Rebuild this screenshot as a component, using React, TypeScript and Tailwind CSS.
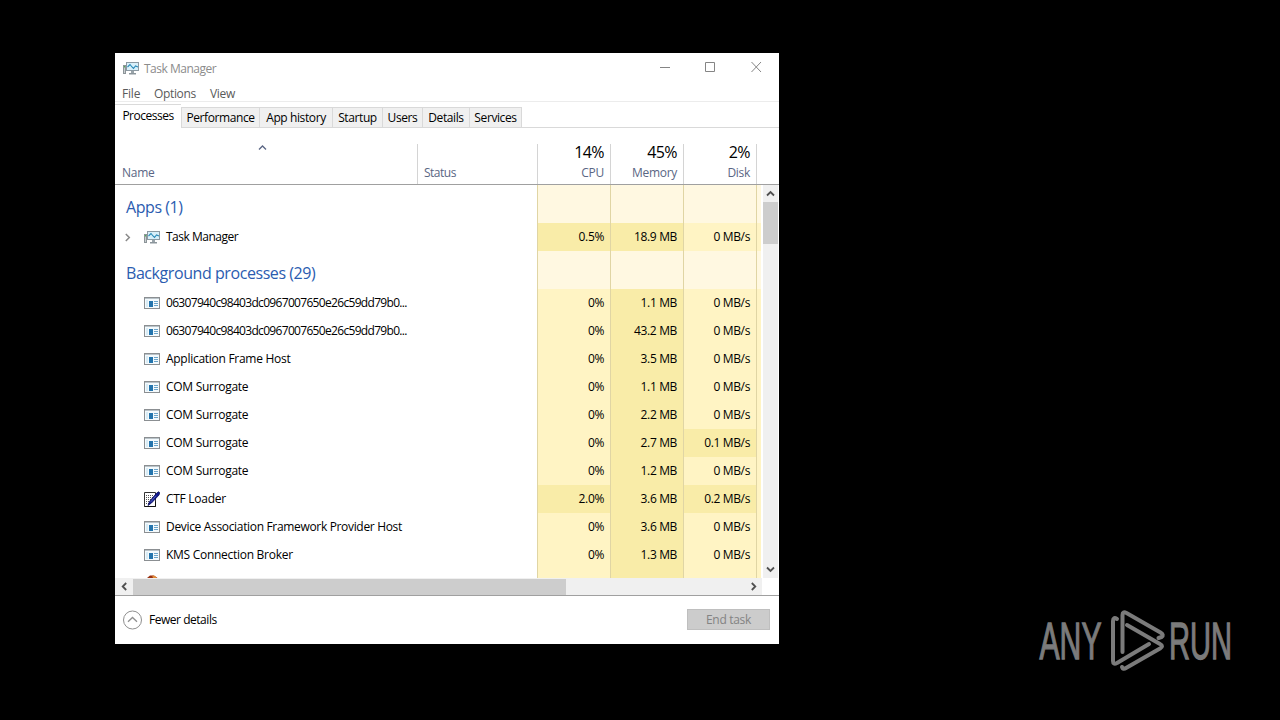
import React from 'react';

type Row = { name: string; cpu: string; mem: string; disk: string; icon?: 'tm' | 'ctf'; track?: string };

const rows: Row[] = [
  { name: '06307940c98403dc0967007650e26c59dd79b0...', cpu: '0%', mem: '1.1 MB', disk: '0 MB/s', track: 'tracking-[-0.68px]' },
  { name: '06307940c98403dc0967007650e26c59dd79b0...', cpu: '0%', mem: '43.2 MB', disk: '0 MB/s', track: 'tracking-[-0.68px]' },
  { name: 'Application Frame Host', cpu: '0%', mem: '3.5 MB', disk: '0 MB/s' },
  { name: 'COM Surrogate', cpu: '0%', mem: '1.1 MB', disk: '0 MB/s' },
  { name: 'COM Surrogate', cpu: '0%', mem: '2.2 MB', disk: '0 MB/s' },
  { name: 'COM Surrogate', cpu: '0%', mem: '2.7 MB', disk: '0.1 MB/s' },
  { name: 'COM Surrogate', cpu: '0%', mem: '1.2 MB', disk: '0 MB/s' },
  { name: 'CTF Loader', cpu: '2.0%', mem: '3.6 MB', disk: '0.2 MB/s', icon: 'ctf' },
  { name: 'Device Association Framework Provider Host', cpu: '0%', mem: '3.6 MB', disk: '0 MB/s', track: 'tracking-[-0.33px]' },
  { name: 'KMS Connection Broker', cpu: '0%', mem: '1.3 MB', disk: '0 MB/s' },
];

const TaskIcon = () => (
  <svg width="16" height="16" viewBox="0 0 16 16" className="shrink-0">
    <path d="M0 5h3v9H0z" fill="#8d9599" />
    <path d="M1 7h1v6H1z" fill="#c9ced0" />
    <path d="M1 6h1v1.500H1z" fill="#4caf50" />
    <rect x="3.500" y="2.500" width="12" height="8" fill="#d8f0fa" stroke="#8c9aa3" />
    <path d="M4.500 7 7 4.500l2 2.500 1.500 1.500 2-2.500 2.500 1" fill="none" stroke="#2a8ab8" strokeWidth="1.100" />
    <path d="M8 11h3v2.500H8z" fill="#9aa4aa" />
    <path d="M6 13h7v1.500H6z" fill="#8c969c" />
  </svg>
);

const AppIcon = () => (
  <svg width="16" height="16" viewBox="0 0 16 16" className="shrink-0" shapeRendering="crispEdges">
    <rect x="0" y="2" width="16" height="12" fill="#8b8f92" />
    <rect x="1" y="4" width="14" height="9" fill="#f4fafd" />
    <rect x="1" y="3" width="14" height="1" fill="#b9c3c9" />
    <rect x="2" y="5" width="2" height="7" fill="#d9ecf5" />
    <rect x="5" y="6" width="4" height="6" fill="#2374ad" />
    <rect x="10" y="6" width="4" height="1" fill="#6ba5ca" />
    <rect x="10" y="8" width="4" height="1" fill="#6ba5ca" />
    <rect x="10" y="10" width="4" height="1" fill="#6ba5ca" />
  </svg>
);

const CtfIcon = () => (
  <svg width="16" height="16" viewBox="0 0 16 16" className="shrink-0">
    <path d="M.5 1.500h11v14H.5z" fill="#fff" stroke="#333" />
    <path d="M2 4.500h8M2 6.500h8M2 8.500h6M2 10.500h4M2 12.500h3" stroke="#555" strokeDasharray="1 1" />
    <path d="M4 14.500 5.500 10.500 12.500 2.200l2-1.400 1.200.8-.7 2.400-7.500 8z" fill="#10188f" stroke="#070b5a" strokeWidth=".8" />
    <path d="m6.500 11.200 5.500-6.500" stroke="#8495d8" strokeWidth=".6" />
    <path d="M.5 15.500h11v-5" fill="none" stroke="#111" />
  </svg>
);

const ShieldTop = () => (
  <svg width="16" height="16" viewBox="0 0 16 16" className="shrink-0">
    <path d="M3 3 6 .5h4L13.500 3v5H3z" fill="#9a3212" />
    <path d="M8 .5 11 1l2 2H9z" fill="#e08a35" />
  </svg>
);

const Chevron = ({ dir, className, weight = 1.8 }: { dir: 'up' | 'down' | 'left' | 'right'; className?: string; weight?: number }) => {
  const d = { up: 'M1 6.5 4.5 3 8 6.5', down: 'M1 2.5 4.500 6 8 2.500', left: 'M6.2 1 2.700 4.500 6.2 8', right: 'M2.800 1 6.3 4.500 2.800 8' }[dir];
  return (
    <svg width="9" height="9" viewBox="0 0 9 9" className={className ?? 'text-[#505050]'}>
      <path d={d} fill="none" stroke="currentColor" strokeWidth={weight} />
    </svg>
  );
};

const low = 'bg-[#fff4c4]';
const high = 'bg-[#f9eca8]';

const Cell = ({ text, hot }: { text?: string; hot?: boolean }) => (
  <div className={`flex w-[73px] items-center justify-end border-l border-[#e0d5a4] pr-[6px] text-[12px] tracking-[-0.35px] ${text === undefined ? 'bg-[#fff8e1]' : hot ? high : low}`}>
    {text}
  </div>
);

const Cells = ({ row }: { row?: Row }) => (
  <>
    <Cell text={row?.cpu} hot={row !== undefined && row.cpu !== '0%' && row.cpu !== ''} />
    <Cell text={row?.mem} hot />
    <Cell text={row?.disk} hot={row !== undefined && row.disk.startsWith('0.')} />
    <div className={`w-[5px] border-l border-[#e0d5a4] ${row ? low : 'bg-[#fff8e1]'}`} />
  </>
);

const Group = ({ label }: { label: string }) => (
  <div className="flex h-[38px] shrink-0">
    <div className="flex w-[422px] items-center pt-[6px] pl-[11px] text-[16px] tracking-[-0.43px] text-[#2b5cb0]">{label}</div>
    <Cells />
  </div>
);

const Process = ({ row, expandable }: { row: Row; expandable?: boolean }) => (
  <div className="flex h-[28px] shrink-0">
    <div className="flex w-[422px] items-center pl-[8px]">
      <div className="w-[21px]">{expandable && <Chevron dir="right" weight={1.5} className="text-[#8a8a8a]" />}</div>
      {row.icon === 'tm' ? <TaskIcon /> : row.icon === 'ctf' ? <CtfIcon /> : <AppIcon />}
      <span className={`ml-[6px] whitespace-nowrap ${row.track ?? 'tracking-[-0.28px]'}`}>{row.name}</span>
    </div>
    <Cells row={row} />
  </div>
);

const tabs = [
  { label: 'Performance', w: 'w-[78px]' },
  { label: 'App history', w: 'w-[73px]' },
  { label: 'Startup', w: 'w-[50px]' },
  { label: 'Users', w: 'w-[40px]' },
  { label: 'Details', w: 'w-[47px]' },
  { label: 'Services', w: 'w-[52px]' },
];

const HeadCol = ({ pct, label }: { pct: string; label: string }) => (
  <div className="flex h-[40px] w-[73px] flex-col items-end border-l border-[#d4d4d4] pr-[6px]">
    <span className="text-[16px] leading-[17px] tracking-[-0.6px]">{pct}</span>
    <span className="leading-[24px] tracking-[-0.3px] text-[#5a6684]">{label}</span>
  </div>
);

export default function App() {
  return (
    <div className="relative h-[720px] w-[1280px] overflow-hidden bg-black pt-[53px] pl-[115px] font-['Open_Sans','Noto_Sans',sans-serif] text-[12px] text-black">
      <div className="flex h-[591px] w-[664px] flex-col overflow-hidden bg-white">
        <div className="flex h-[30px] shrink-0 items-center pl-[8px] text-[#8c8c8c]">
          <TaskIcon />
          <span className="ml-[5px] pt-px tracking-[-0.5px]">Task Manager</span>
          <svg width="104" height="14" viewBox="0 0 104 14" className="mr-[16px] ml-auto" fill="none" stroke="#858585">
            <path d="M1 6.500h10M46.500 1.500h9v9h-9zM92.500 1l9.500 10m0-10-9.500 10" />
          </svg>
        </div>
        <div className="flex h-[19px] shrink-0 items-center border-b border-[#ececec] pt-[3px] pl-[7px] text-[#5a5a5a]">
          <span className="w-[32px] tracking-[-0.2px]">File</span>
          <span className="w-[56px] tracking-[-0.35px]">Options</span>
          <span className="tracking-[-0.3px]">View</span>
        </div>
        <div className="flex h-[26px] shrink-0 items-end">
          <div className="flex h-[24px] w-[66px] items-center justify-center border-t border-[#dadada] pb-px tracking-[-0.5px]">Processes</div>
          <div className="flex h-[21px] flex-1 border-b border-l border-[#d9d9d9]">
            {tabs.map((t) => (
              <div key={t.label} className={`flex items-center justify-center border-t border-r border-[#d9d9d9] bg-[#f0f0f0] pt-px tracking-[-0.4px] ${t.w}`}>
                {t.label}
              </div>
            ))}
          </div>
        </div>
        <div className="flex h-[57px] shrink-0 items-end border-b border-[#a0a0a0] text-black">
          <div className="flex h-[40px] w-[302px] flex-col pl-[7px]">
            <Chevron dir="up" weight={1.3} className="-mt-px ml-[136px] text-[#5a6684]" />
            <span className="mt-[10px] leading-[22px] tracking-[-0.25px] text-[#5a6684]">Name</span>
          </div>
          <div className="flex h-[40px] w-[120px] items-end border-l border-[#d4d4d4] pl-[6px] leading-[23px] tracking-[-0.5px] text-[#5a6684]">Status</div>
          <HeadCol pct="14%" label="CPU" />
          <HeadCol pct="45%" label="Memory" />
          <HeadCol pct="2%" label="Disk" />
          <div className="h-[40px] border-l border-[#d4d4d4]" />
        </div>
        <div className="flex h-[393px] shrink-0">
          <div className="flex h-full w-[648px] flex-col overflow-hidden">
            <Group label="Apps (1)" />
            <Process expandable row={{ name: 'Task Manager', cpu: '0.5%', mem: '18.9 MB', disk: '0 MB/s', icon: 'tm', track: 'tracking-[-0.5px]' }} />
            <Group label="Background processes (29)" />
            {rows.map((r, i) => (
              <Process key={i} row={r} />
            ))}
            <div className="flex h-[9px] shrink-0 overflow-hidden">
              <div className="flex w-[422px] items-start pt-[6px] pl-[29px]"><ShieldTop /></div>
              <Cells row={{ name: '', cpu: '', mem: '', disk: '' }} />
            </div>
          </div>
          <div className="flex w-[15px] flex-col items-center bg-[#f0f0f0]">
            <div className="flex h-[17px] items-center"><Chevron dir="up" /></div>
            <div className="h-[42px] w-full bg-[#cdcdcd]" />
            <div className="mt-auto flex h-[17px] items-center"><Chevron dir="down" /></div>
          </div>
        </div>
        <div className="flex h-[18px] shrink-0 border-b border-[#a0a0a0]">
          <div className="flex w-[647px] items-center bg-[#f0f0f0]">
            <div className="flex w-[18px] justify-center"><Chevron dir="left" /></div>
            <div className="h-[16px] w-[433px] bg-[#cdcdcd]" />
            <div className="mr-[4px] ml-auto"><Chevron dir="right" /></div>
          </div>
        </div>
        <div className="flex flex-1 items-center pr-[9px] pb-px pl-[7px]">
          <svg width="20" height="20" viewBox="0 0 20 20" fill="none" stroke="#8f8f8f">
            <circle cx="10.500" cy="10" r="9" />
            <path d="m6 11.800 4.500-4.300 4.500 4.300" strokeWidth="1.300" />
          </svg>
          <span className="ml-[7px] pt-px tracking-[-0.47px]">Fewer details</span>
          <div className="ml-auto flex h-[21px] w-[83px] items-center justify-center border border-[#bfbfbf] bg-[#cccccc] pt-px tracking-[-0.3px] text-[#838383]">End task</div>
        </div>
      </div>
      <svg width="210" height="70" viewBox="0 0 210 70" className="absolute top-[606px] left-[1035px]">
        <g fill="#7b7b7b" stroke="#7b7b7b" strokeWidth="1.300" fontFamily="'Liberation Sans Narrow','Liberation Sans',sans-serif" fontSize="51">
          <text x="4.500" y="53" textLength="62" lengthAdjust="spacingAndGlyphs">ANY</text>
          <text x="134" y="53" textLength="63" lengthAdjust="spacingAndGlyphs">RUN</text>
        </g>
        <g fill="none" stroke="#7b7b7b" strokeWidth="4" strokeLinecap="round" strokeLinejoin="round">
          <path d="M87.500 46V9q0-4 4-2l34 19.500q4 2.500 1 4.500l-3 1" />
          <path d="M82 13q-4-2.500-4 2V55q0 4 4 2l32-19" />
          <path d="m92 19 33 19q4 2 0 4.500L91 62q-3 2-4-1" />
        </g>
      </svg>
    </div>
  );
}
